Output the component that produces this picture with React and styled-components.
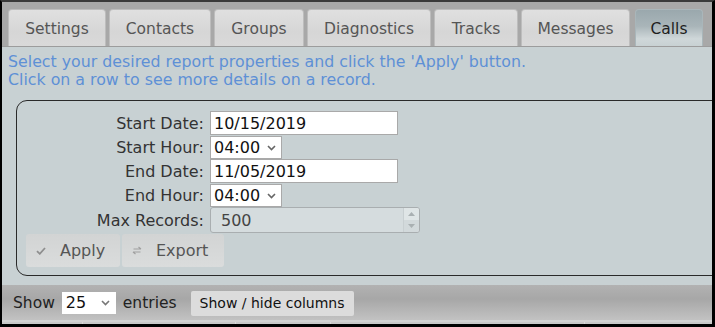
import React from "react";
import styled, { createGlobalStyle } from "styled-components";

const GlobalStyle = createGlobalStyle`
  html, body {
    margin: 0;
    padding: 0;
    background: #c8d1d3;
  }
  * {
    box-sizing: border-box;
  }
`;

const Frame = styled.div`
  width: 715px;
  height: 327px;
  overflow: hidden;
  background: #c8d1d3;
  border-style: solid;
  border-color: #000;
  border-width: 2px 3px 3px 2px;
  border-top-color: #3a3a3a;
  font-family: "DejaVu Sans", Verdana, sans-serif;
  display: flex;
  flex-direction: column;
`;

const TabBar = styled.div`
  display: flex;
  flex-shrink: 0;
  gap: 3px;
  padding: 7px 6px 0 6px;
  background: #a8a8a8;
  border-bottom: 1px solid #9c9c9c;
  height: 45px;
`;

const Tab = styled.div`
  display: flex;
  align-items: center;
  justify-content: center;
  height: 37px;
  padding: 2px 0 0;
  width: ${(p) => p.$w}px;
  font-size: 15.5px;
  border: 1px solid ${(p) => (p.$active ? "#a9b6ba" : "#bdbdbd")};
  border-bottom: none;
  border-radius: 4px 4px 0 0;
  color: ${(p) => (p.$active ? "#1e1e1e" : "#555")};
  background: ${(p) =>
    p.$active
      ? "linear-gradient(#9aa8ad, #a9b5b9 45%, #cfd7d9 80%, #c8d1d3)"
      : "linear-gradient(#e0e0e0, #d6d6d6 60%, #d9d9d9)"};
  margin-bottom: ${(p) => (p.$active ? "-1px" : "0")};
  margin-left: ${(p) => p.$ml || 0}px;
`;

const Body = styled.div`
  flex: 1;
  display: flex;
  flex-direction: column;
  min-height: 0;
`;

const Intro = styled.div`
  flex-shrink: 0;
  padding: 6px 0 0 6px;
  color: #5e90d6;
  font-size: 15.8px;
  line-height: 18px;
`;

const FieldSet = styled.div`
  flex-shrink: 0;
  margin: 11px -20px 0 14px;
  height: 176px;
  border: 1px solid #2a2a2a;
  border-radius: 11px;
  padding: 10px 9px 0 9px;
`;

const FormGrid = styled.div`
  display: grid;
  grid-template-columns: 178px auto;
  column-gap: 6px;
  row-gap: 0;
  align-items: center;
  justify-content: start;
`;

const Label = styled.div`
  text-align: right;
  font-size: 16px;
  color: #333;
  white-space: nowrap;
`;

const TextInput = styled.input`
  width: 188px;
  height: 24px;
  border: 1px solid #a9a9a9;
  background: #fff;
  font-family: "DejaVu Sans", Verdana, sans-serif;
  font-size: 16px;
  color: #111;
  padding: 0 3px;
  outline: none;
`;

const SelectWrap = styled.div`
  position: relative;
  width: ${(p) => p.$w}px;
  height: ${(p) => p.$h}px;
  margin-top: ${(p) => p.$mt || 0}px;
`;

const Select = styled.select`
  appearance: none;
  width: 100%;
  height: 100%;
  border: ${(p) => (p.$plain ? "none" : "1px solid #a9a9a9")};
  background: #fff;
  font-family: "DejaVu Sans", Verdana, sans-serif;
  font-size: 16px;
  color: #111;
  padding: 0 0 0 ${(p) => (p.$plain ? 4 : 3)}px;
  outline: none;
`;

const Chevron = styled.svg`
  position: absolute;
  right: ${(p) => p.$r}px;
  top: 50%;
  margin-top: -3px;
  pointer-events: none;
`;

const NumberBox = styled.div`
  display: flex;
  width: 210px;
  height: 26px;
  border: 1px solid #a9aeb0;
  border-radius: 3px;
  background: #d5dcde;
  overflow: hidden;
`;

const NumberValue = styled.div`
  flex: 1;
  font-size: 16px;
  color: #444;
  padding: 3px 0 0 10px;
`;

const Spinner = styled.div`
  width: 16px;
  display: flex;
  flex-direction: column;
  border-left: 1px solid #c8cfd1;
`;

const SpinHalf = styled.div`
  flex: 1;
  display: flex;
  align-items: center;
  justify-content: center;
  background: ${(p) => (p.$down ? "#d2d9db" : "#dfe5e6")};
`;

const ButtonRow = styled.div`
  display: flex;
  gap: 2px;
  margin-top: 1px;
`;

const ActionButton = styled.div`
  display: flex;
  align-items: center;
  width: ${(p) => p.$w}px;
  height: 33px;
  padding-left: 10px;
  gap: 14px;
  font-size: 16px;
  color: #555;
  border-radius: 3px;
  background: linear-gradient(#d2d4d4, #dadcdc);
`;

const Footer = styled.div`
  flex-shrink: 0;
  margin-top: 9px;
  height: 35px;
  display: flex;
  align-items: center;
  padding: 0 0 0 11px;
  background: linear-gradient(#b2b2b2, #a7a7a7 40%, #c2c2c2);
  font-size: 15.5px;
  color: #222;
`;

const FooterText = styled.span`
  margin: 0 ${(p) => p.$mr}px 0 ${(p) => p.$ml || 0}px;
`;

const ColumnsButton = styled.div`
  height: 25px;
  width: 163px;
  display: flex;
  align-items: center;
  justify-content: center;
  font-size: 14px;
  color: #111;
  background: #dcdcdc;
  border-radius: 2px;
  margin-top: 1px;
`;

const HeaderRow = styled.div`
  flex-shrink: 0;
  display: grid;
  grid-template-columns: 81px 153px 95px 254px 1fr;
  height: 6px;
  border-top: 2px solid #d2d2d2;
  background: #c8c8c8;
`;

const HeaderCell = styled.div`
  border-right: 1px solid #dadada;
`;

const tabs = [
  { name: "Settings", w: 98 },
  { name: "Contacts", w: 102 },
  { name: "Groups", w: 90 },
  { name: "Diagnostics", w: 124 },
  { name: "Tracks", w: 84 },
  { name: "Messages", w: 109 },
  { name: "Calls", w: 68, active: true, ml: 2 },
];

const ChevronIcon = ({ r, color = "#666" }) => (
  <Chevron $r={r} width="9" height="6" viewBox="0 0 9 6">
    <path d="M1 1 L4.5 4.5 L8 1" fill="none" stroke={color} strokeWidth="1.6" />
  </Chevron>
);

const HourSelect = () => (
  <SelectWrap $w={72} $h={23} $mt={1}>
    <Select defaultValue="04:00">
      <option>04:00</option>
    </Select>
    <ChevronIcon r={6} />
  </SelectWrap>
);

export default function App() {
  return (
    <>
      <GlobalStyle />
      <Frame>
        <TabBar>
          {tabs.map((t) => (
            <Tab key={t.name} $w={t.w} $active={t.active} $ml={t.ml}>
              {t.name}
            </Tab>
          ))}
        </TabBar>
        <Body>
          <Intro>
            Select your desired report properties and click the 'Apply' button.
            <br />
            Click on a row to see more details on a record.
          </Intro>
          <FieldSet>
            <FormGrid>
              <Label>Start Date:</Label>
              <TextInput defaultValue="10/15/2019" />
              <Label>Start Hour:</Label>
              <HourSelect />
              <Label>End Date:</Label>
              <TextInput defaultValue="11/05/2019" />
              <Label>End Hour:</Label>
              <HourSelect />
              <Label>Max Records:</Label>
              <NumberBox>
                <NumberValue>500</NumberValue>
                <Spinner>
                  <SpinHalf>
                    <svg width="7" height="4" viewBox="0 0 7 4">
                      <path d="M0 4 L3.5 0 L7 4 Z" fill="#a9b0b2" />
                    </svg>
                  </SpinHalf>
                  <SpinHalf $down>
                    <svg width="7" height="4" viewBox="0 0 7 4">
                      <path d="M0 0 L3.5 4 L7 0 Z" fill="#a9b0b2" />
                    </svg>
                  </SpinHalf>
                </Spinner>
              </NumberBox>
            </FormGrid>
            <ButtonRow>
              <ActionButton $w={94}>
                <svg width="10" height="8" viewBox="0 0 10 8">
                  <path d="M1 4.2 L3.8 6.8 L9 1" fill="none" stroke="#8e8e8e" strokeWidth="1.8" />
                </svg>
                Apply
              </ActionButton>
              <ActionButton $w={102}>
                <svg width="10" height="9" viewBox="0 0 10 9">
                  <path d="M1.5 3 H9 M6.5 1 L9 3 M8.5 6 H1 M3.5 8 L1 6" fill="none" stroke="#a0a0a0" strokeWidth="1.2" />
                </svg>
                Export
              </ActionButton>
            </ButtonRow>
          </FieldSet>
          <Footer>
            <FooterText $mr={7}>Show</FooterText>
            <SelectWrap $w={54} $h={22}>
              <Select $plain defaultValue="25">
                <option>25</option>
              </Select>
              <ChevronIcon r={6} color="#777" />
            </SelectWrap>
            <FooterText $ml={7} $mr={14}>entries</FooterText>
            <ColumnsButton>Show / hide columns</ColumnsButton>
          </Footer>
          <HeaderRow>
            <HeaderCell />
            <HeaderCell />
            <HeaderCell />
            <HeaderCell />
            <div />
          </HeaderRow>
        </Body>
      </Frame>
    </>
  );
}
